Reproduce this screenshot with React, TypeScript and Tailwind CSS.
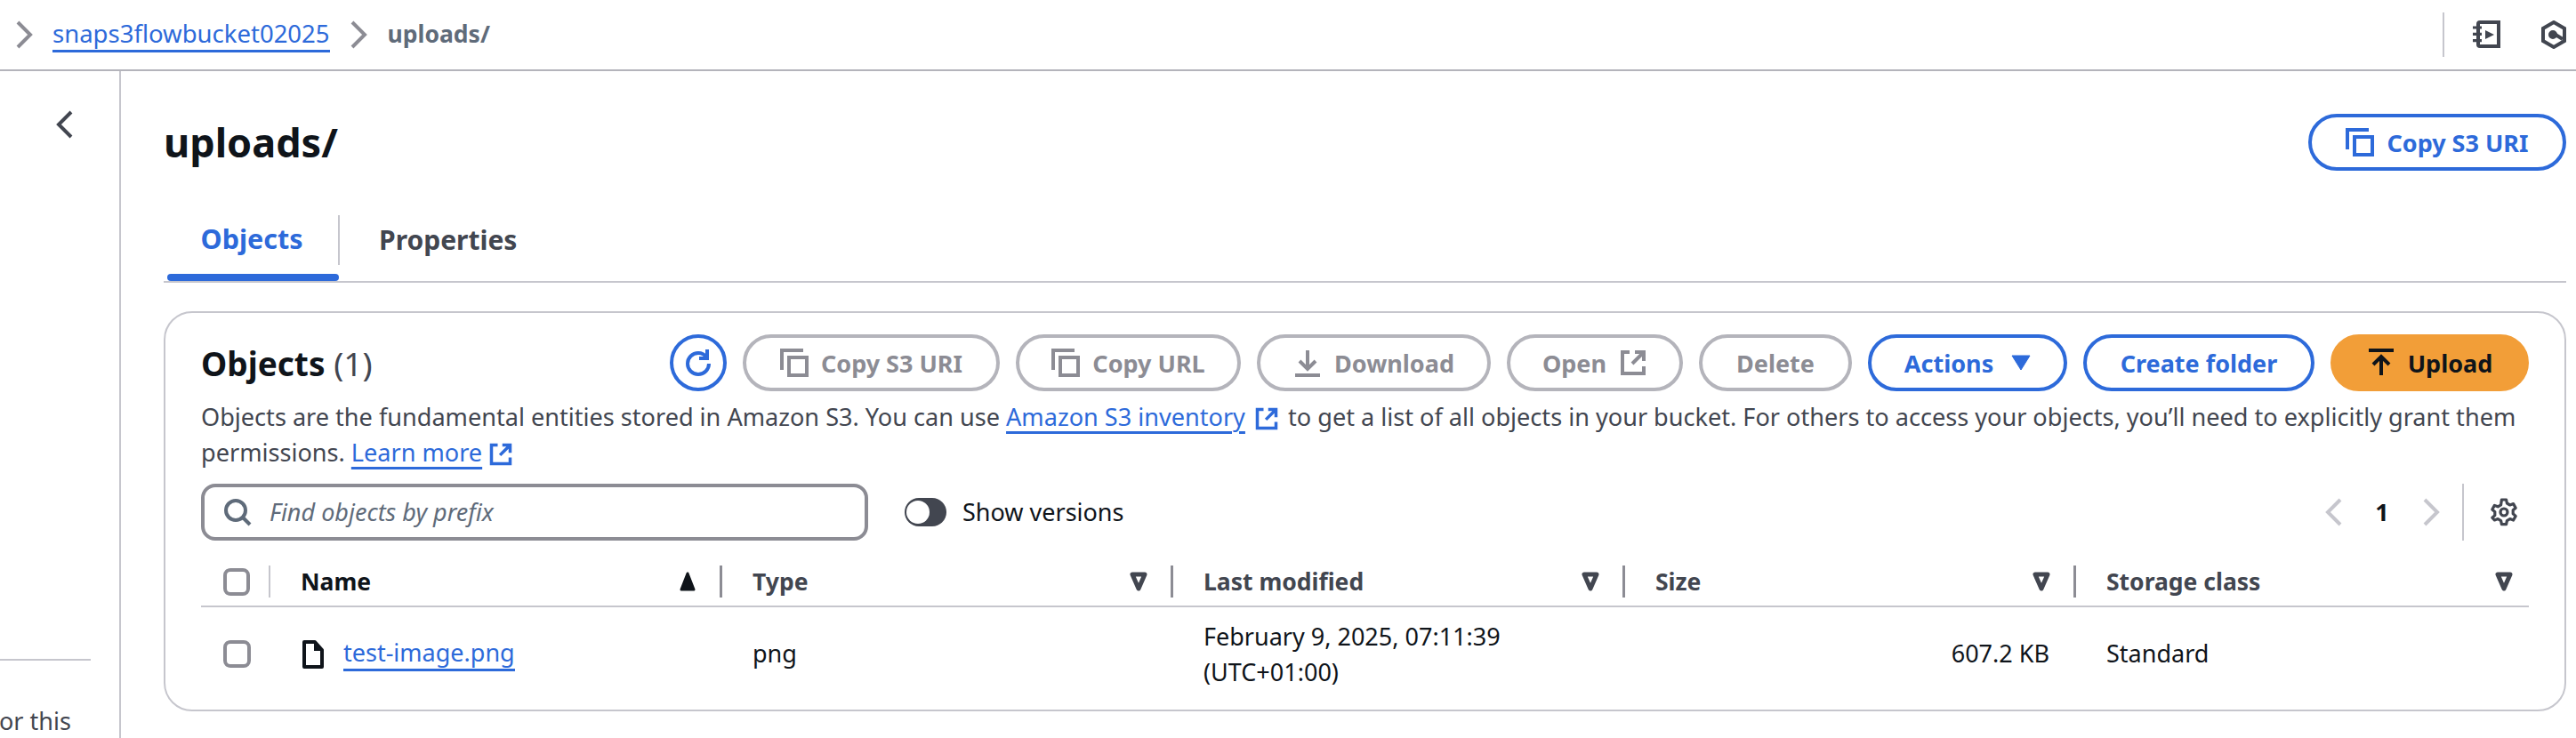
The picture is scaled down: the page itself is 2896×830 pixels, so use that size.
import React from "react";

const FONT = "font-['Noto_Sans','Open_Sans',sans-serif]";

const Icon: React.FC<{ className?: string; children: React.ReactNode; size?: number }> = ({
  className = "",
  children,
  size = 32,
}) => (
  <svg
    viewBox="0 0 16 16"
    width={size}
    height={size}
    fill="none"
    stroke="currentColor"
    strokeWidth={2}
    className={`shrink-0 ${className}`}
  >
    {children}
  </svg>
);

const CopyIcon = () => (
  <Icon>
    <path d="M1 12V1h12" />
    <rect x="5" y="5" width="10" height="10" />
  </Icon>
);

const ExternalIcon: React.FC<{ size?: number }> = ({ size = 32 }) => (
  <Icon size={size}>
    <path d="M6 2H2v12h12v-4" />
    <path d="M9 2h5v5M14 2L7.5 8.5" />
  </Icon>
);

const FilterCaret = () => (
  <svg viewBox="0 0 20 24" width="20" height="24" className="shrink-0 text-[#424650]">
    <path d="M3 4h14l-7 16z" fill="none" stroke="currentColor" strokeWidth="5" strokeLinejoin="round" />
  </svg>
);

const Checkbox = () => (
  <span className="block h-[31px] w-[31px] rounded-[8px] border-[4px] border-[#8c8c94] bg-white" />
);

const Btn: React.FC<{ width: string; tone?: string; children: React.ReactNode }> = ({
  width,
  tone = "border-[#b4b4bb] text-[#8c8c94]",
  children,
}) => (
  <button
    className={`flex h-[64px] shrink-0 items-center justify-center gap-[14px] rounded-full border-[4px] text-[27px] font-bold leading-none ${width} ${tone}`}
  >
    {children}
  </button>
);

const BLUE = "border-[#2d6ada] text-[#2d6ada]";

const Sep: React.FC<{ tone?: string }> = ({ tone = "bg-[#8c8c94]" }) => (
  <span className={`block h-[36px] w-[3px] shrink-0 ${tone}`} />
);

const HeaderCell: React.FC<{ label: string; width: string; last?: boolean }> = ({ label, width, last }) => (
  <div className={`flex h-[36px] items-center ${width}`}>
    <span className="pl-[34px] text-[26.5px] font-bold leading-none text-[#424650]">{label}</span>
    <span className={`ml-auto flex items-center ${last ? "pr-[18px]" : "gap-[26px]"}`}>
      <FilterCaret />
      {!last && <Sep />}
    </span>
  </div>
);

export default function App() {
  return (
    <div className={`flex h-[830px] w-[2896px] flex-col overflow-hidden bg-white text-[#0f141a] ${FONT}`}>
      {/* breadcrumb bar */}
      <div className="flex h-[80px] shrink-0 items-center border-b-2 border-[#b4b4bb] pl-[10px] pr-[9px]">
        <Icon className="text-[#8c8c94]">
          <path d="M5 1l7 7-7 7" />
        </Icon>
        <a className="ml-[17px] border-b-[3px] border-[#2d6ada] text-[27.5px] leading-[36px] text-[#2d6ada]">
          snaps3flowbucket02025
        </a>
        <Icon className="ml-[15px] text-[#8c8c94]">
          <path d="M5 1l7 7-7 7" />
        </Icon>
        <span className="ml-[18px] text-[26.5px] font-bold text-[#5f6b7a]">uploads/</span>
        <span className="ml-auto h-[50px] w-[2px] bg-[#c6c6cd]" />
        <Icon className="ml-[31px] text-[#424650]">
          <path d="M3.5 2a1 1 0 011-1H15v13.5H4.5a1 1 0 01-1-1z" />
          <path d="M.5 4h5M.5 7.7h5M.5 11.3h5" strokeWidth={1.6} />
          <path d="M7.500 5.500l5 2.500-5 2.500z" fill="currentColor" stroke="none" />
        </Icon>
        <Icon className="ml-[44px] text-[#424650]">
          <path d="M8 1l6 3.500v7L8 15l-6-3.500v-7z" />
          <circle cx="7.500" cy="8" r="1.500" fill="currentColor" />
          <path d="M9 8l4 2.500" />
        </Icon>
      </div>

      <div className="flex min-h-0 flex-1">
        {/* collapsed side nav */}
        <aside className="relative flex w-[136px] shrink-0 flex-col border-r-2 border-[#c6c6cd]">
          <Icon className="ml-[58px] mt-[44px] text-[#424650]">
            <path d="M11 1L4 8l7 7" />
          </Icon>
          <div className="mt-[585px] h-[2px] w-[102px] bg-[#c6c6cd]" />
          <span className="mt-[50px] -ml-[1px] self-start text-[27px] leading-[36px] text-[#424650]">or this</span>
        </aside>

        <main className="min-w-0 flex-1 pl-[48px] pr-[11px]">
          <div className="flex items-center justify-between pt-[48px]">
            <h1 className="text-[45px] font-bold leading-[64px]">uploads/</h1>
            <Btn width="w-[290px]" tone={BLUE}>
              <CopyIcon />
              Copy S3 URI
            </Btn>
          </div>

          {/* tabs */}
          <div className="mt-[50px] flex h-[76px] border-b-2 border-[#c6c6cd]">
            <div className="relative flex w-[198px] items-center justify-center pb-[20px] text-[30.5px] font-bold text-[#2d6ada]">
              Objects
              <span className="absolute bottom-0 left-[4px] right-[1px] h-[8px] rounded-full bg-[#2d6ada]" />
              <span className="absolute right-0 top-0 h-[56px] w-[2px] bg-[#c6c6cd]" />
            </div>
            <div className="flex items-center pb-[20px] pl-[44px] text-[30px] font-bold text-[#424650]">Properties</div>
          </div>

          {/* objects card */}
          <section className="mt-[32px] h-[450px] rounded-[32px] border-2 border-[#c6c6cd] px-[40px] pt-[24px]">
            <div className="flex items-center">
              <h2 className="text-[37px] font-bold leading-none">
                Objects <span className="font-normal text-[#424650]">(1)</span>
              </h2>
              <div className="ml-auto flex gap-[18px]">
                <Btn width="w-[64px]" tone={BLUE}>
                  <Icon>
                    <path d="M14 8.500A6 6 0 118 2.500c2 0 3.600.9 4.800 2.500" />
                    <path d="M13 .5v5H8.500" />
                  </Icon>
                </Btn>
                <Btn width="w-[289px]">
                  <CopyIcon />
                  Copy S3 URI
                </Btn>
                <Btn width="w-[253px]">
                  <CopyIcon />
                  Copy URL
                </Btn>
                <Btn width="w-[263px]">
                  <Icon>
                    <path d="M8 1v10M3.500 7L8 11.500 12.500 7M1 15h14" />
                  </Icon>
                  Download
                </Btn>
                <Btn width="w-[198px]">
                  Open
                  <ExternalIcon />
                </Btn>
                <Btn width="w-[172px]">Delete</Btn>
                <Btn width="w-[224px]" tone={BLUE}>
                  Actions
                  <svg viewBox="0 0 22 18" width="22" height="18" className="ml-[6px]">
                    <path d="M1 1h20L11 17z" fill="currentColor" stroke="currentColor" strokeLinejoin="round" />
                  </svg>
                </Btn>
                <Btn width="w-[260px]" tone={BLUE}>
                  Create folder
                </Btn>
                <Btn width="w-[223px]" tone="border-[#f29e38] bg-[#f29e38] text-[#0f141a]">
                  <Icon>
                    <path d="M1 1h14M8 15V5M3.500 9L8 4.500 12.500 9" />
                  </Icon>
                  Upload
                </Btn>
              </div>
            </div>

            <p className="mt-[9px] text-[27.1px] leading-[40px] text-[#424650]">
              Objects are the fundamental entities stored in Amazon S3. You can use{" "}
              <a className="text-[#2d6ada] underline decoration-[3px] underline-offset-[6px]">Amazon S3 inventory</a>{" "}
              <span className="mx-[3px] inline-block align-[-6px] text-[#2d6ada]">
                <ExternalIcon size={28} />
              </span>{" "}
              to get a list of all objects in your bucket. For others to access your objects, you’ll need to explicitly
              grant them permissions.{" "}
              <a className="text-[#2d6ada] underline decoration-[3px] underline-offset-[6px]">Learn more</a>{" "}
              <span className="inline-block align-[-6px] text-[#2d6ada]">
                <ExternalIcon size={28} />
              </span>
            </p>

            {/* filter row */}
            <div className="mt-[15px] flex h-[64px] items-center">
              <div className="flex h-[64px] w-[750px] items-center gap-[20px] rounded-[16px] border-[4px] border-[#8c8c94] pl-[21px]">
                <Icon className="text-[#5f6b7a]">
                  <circle cx="7" cy="7" r="5.500" />
                  <path d="M11 11l4 4" />
                </Icon>
                <span className="text-[27px] italic text-[#5f6b7a]">Find objects by prefix</span>
              </div>
              <span className="relative ml-[41px] h-[32px] w-[47px] rounded-full bg-[#424650]">
                <span className="absolute left-[2px] top-[3px] h-[26px] w-[26px] rounded-full bg-white" />
              </span>
              <span className="ml-[18px] text-[27px] text-[#0f141a]">Show versions</span>
              <div className="ml-auto flex h-[64px] items-center">
                <Icon className="text-[#c6c6cd]">
                  <path d="M11 1L4 8l7 7" />
                </Icon>
                <span className="ml-[22px] w-[30px] text-center text-[27px] font-bold">1</span>
                <Icon className="ml-[23px] text-[#c6c6cd]">
                  <path d="M5 1l7 7-7 7" />
                </Icon>
                <span className="ml-[20px] h-[64px] w-[2px] bg-[#c6c6cd]" />
                <Icon className="ml-[29px] mr-[12px] text-[#424650]">
                  <circle cx="8" cy="8" r="2" strokeWidth={1.6} />
                  <path
                    d="M6.700 1h2.600l.4 2 1.700 1 1.900-.7 1.300 2.300-1.500 1.300v2l1.500 1.300-1.300 2.300-1.900-.7-1.700 1-.4 2H6.700l-.4-2-1.700-1-1.900.7L1.400 11.100l1.500-1.300v-2L1.400 6.500l1.300-2.300 1.900.7 1.700-1z"
                    strokeWidth={1.6}
                    strokeLinejoin="round"
                  />
                </Icon>
              </div>
            </div>

            {/* table header */}
            <div className="mt-[28px] flex h-[47px] items-start border-b-2 border-[#c6c6cd]">
              <div className="flex w-[78px] items-center pl-[25px]">
                <Checkbox />
                <span className="ml-[21px] h-[36px] w-[2px] bg-[#c6c6cd]" />
              </div>
              <div className="flex h-[36px] w-[508px] items-center">
                <span className="pl-[34px] text-[26.5px] font-bold leading-none">Name</span>
                <span className="ml-auto flex items-center gap-[26px]">
                  <svg viewBox="0 0 20 24" width="20" height="24">
                    <path d="M10 3l7 18H3z" fill="#0f141a" stroke="#0f141a" strokeWidth="3" strokeLinejoin="round" />
                  </svg>
                  <Sep />
                </span>
              </div>
              <HeaderCell label="Type" width="w-[507px]" />
              <HeaderCell label="Last modified" width="w-[508px]" />
              <HeaderCell label="Size" width="w-[507px]" />
              <HeaderCell label="Storage class" width="flex-1" last />
            </div>

            {/* table row */}
            <div className="flex h-[113px] items-center pb-[8px] text-[27px]">
              <div className="w-[78px] pl-[25px]">
                <Checkbox />
              </div>
              <div className="flex w-[508px] items-center pl-[36px]">
                <svg viewBox="0 0 24 32" width="24" height="32" className="shrink-0 text-[#0f141a]">
                  <path d="M2 2h12l8 9v19H2z" fill="none" stroke="currentColor" strokeWidth="4" strokeLinejoin="round" />
                  <path d="M13 3v9h8z" fill="currentColor" />
                </svg>
                <a className="ml-[22px] border-b-[3px] border-[#2d6ada] leading-[36px] text-[#2d6ada]">test-image.png</a>
              </div>
              <div className="w-[507px] pl-[34px]">png</div>
              <div className="w-[508px] pl-[34px] leading-[40px]">
                February 9, 2025, 07:11:39
                <br />
                (UTC+01:00)
              </div>
              <div className="w-[477px] text-right">607.2 KB</div>
              <div className="pl-[64px]">Standard</div>
            </div>
          </section>
        </main>
      </div>
    </div>
  );
}
